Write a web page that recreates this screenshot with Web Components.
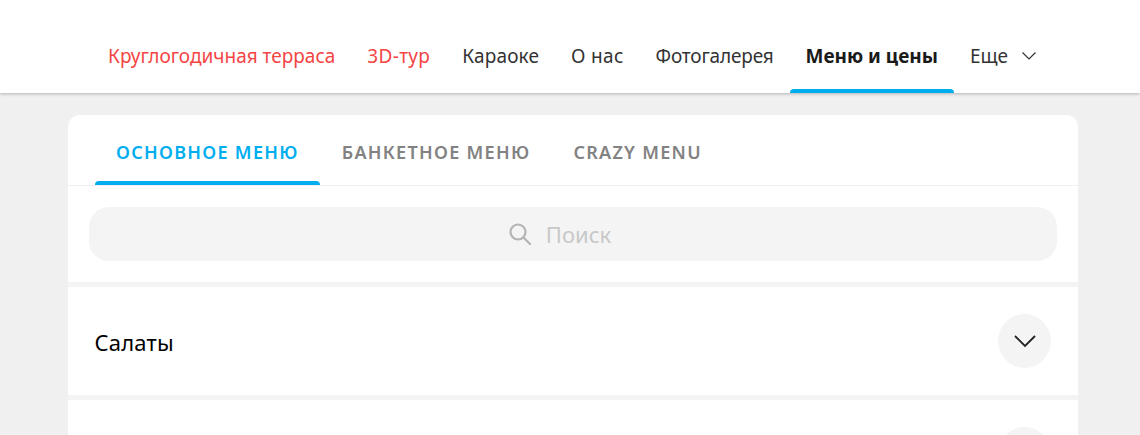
<!DOCTYPE html>
<html lang="ru">
<head>
<meta charset="utf-8">
<style>
  html, body { margin: 0; height: 435px; overflow: hidden; }
  body { background: #f0f0f0; font-family: "Noto Sans", "Open Sans", sans-serif; }
</style>
</head>
<body>
<top-nav>
  <nav-link accent>Круглогодичная терраса</nav-link>
  <nav-link accent style="letter-spacing: .33px">3D-тур</nav-link>
  <nav-link style="letter-spacing: .14px">Караоке</nav-link>
  <nav-link style="letter-spacing: .3px">О нас</nav-link>
  <nav-link style="letter-spacing: -.17px">Фотогалерея</nav-link>
  <nav-link active>Меню и цены</nav-link>
  <nav-link more>Еще</nav-link>
</top-nav>
<menu-card>
  <menu-tab active>Основное меню</menu-tab>
  <menu-tab>Банкетное меню</menu-tab>
  <menu-tab>Crazy menu</menu-tab>
  <search-box slot="search">Поиск</search-box>
  <menu-section slot="sections">Салаты</menu-section>
  <menu-section slot="sections"></menu-section>
</menu-card>
<script>
class TopNav extends HTMLElement {
  constructor() {
    super();
    this.attachShadow({ mode: 'open' }).innerHTML = `
      <style>
        :host {
          display: flex;
          height: 93px;
          padding-left: 92px;
          box-sizing: border-box;
          background: #fff;
          box-shadow: 0 1px 3px rgba(0, 0, 0, 0.25);
          position: relative;
        }
      </style>
      <slot></slot>`;
  }
}

class NavLink extends HTMLElement {
  constructor() {
    super();
    this.attachShadow({ mode: 'open' }).innerHTML = `
      <style>
        :host {
          display: flex;
          align-items: center;
          height: 93px;
          padding: 19px 16px 0;
          box-sizing: border-box;
          font-size: 19px;
          color: #333;
          white-space: nowrap;
          position: relative;
        }
        :host([accent]) { color: #f44545; }
        :host([active]) { color: #1a1a1a; font-weight: 700; }
        :host([active])::after {
          content: '';
          position: absolute;
          left: 0;
          right: 0;
          bottom: 0;
          height: 4px;
          background: #00aeef;
          border-radius: 4px 4px 0 0;
        }
        svg { display: none; margin-left: 13px; }
        :host([more]) svg { display: block; }
      </style>
      <slot></slot>
      <svg width="16" height="10" viewBox="0 0 16 10" fill="none" stroke="#333" stroke-width="1.2"><path d="M1.5 1.5L8 8l6.500-6.500"/></svg>`;
  }
}

class MenuCard extends HTMLElement {
  constructor() {
    super();
    this.attachShadow({ mode: 'open' }).innerHTML = `
      <style>
        :host {
          display: block;
          width: 1010px;
          margin: 22px 0 0 68px;
          background: #f4f4f4;
          border-radius: 12px 12px 0 0;
          overflow: hidden;
        }
        .tabs {
          display: flex;
          height: 71px;
          box-sizing: border-box;
          padding-left: 27px;
          background: #fff;
          border-bottom: 1px solid #efefef;
        }
        .search { background: #fff; padding: 21px; margin-bottom: 5px; }
      </style>
      <div class="tabs"><slot></slot></div>
      <div class="search"><slot name="search"></slot></div>
      <slot name="sections"></slot>`;
  }
}

class MenuTab extends HTMLElement {
  constructor() {
    super();
    this.attachShadow({ mode: 'open' }).innerHTML = `
      <style>
        :host {
          display: flex;
          align-items: center;
          height: 70px;
          padding: 3px 21px 0 22px;
          box-sizing: border-box;
          font-size: 18px;
          font-weight: 600;
          letter-spacing: 1.3px;
          text-transform: uppercase;
          color: #828282;
          white-space: nowrap;
          position: relative;
        }
        :host([active]) { color: #00aeef; padding-left: 21px; }
        :host([active])::after {
          content: '';
          position: absolute;
          left: 0;
          right: 0;
          bottom: 0;
          height: 4px;
          background: #00aeef;
          border-radius: 4px 4px 0 0;
        }
      </style>
      <slot></slot>`;
  }
}

class SearchBox extends HTMLElement {
  constructor() {
    super();
    this.attachShadow({ mode: 'open' }).innerHTML = `
      <style>
        :host {
          display: flex;
          align-items: center;
          justify-content: center;
          gap: 15px;
          height: 54px;
          padding-right: 26px;
          box-sizing: border-box;
          border-radius: 20px;
          background: #f4f4f4;
          font-size: 22px;
          color: #c8c8c8;
        }
        svg { display: block; }
      </style>
      <svg width="22" height="22" viewBox="0 0 22 22" fill="none" stroke="#b4b4b4" stroke-width="2.2"><circle cx="9" cy="9" r="7.500"/><path d="M14.500 14.500l6.500 6.500" stroke-linecap="round"/></svg>
      <slot></slot>`;
  }
}

class MenuSection extends HTMLElement {
  constructor() {
    super();
    this.attachShadow({ mode: 'open' }).innerHTML = `
      <style>
        :host {
          display: flex;
          align-items: center;
          height: 108px;
          margin-bottom: 5px;
          padding: 0 27px 0 26.5px;
          box-sizing: border-box;
          background: #fff;
          font-size: 22px;
          letter-spacing: .2px;
          color: #000;
        }
        .label { padding-top: 2px; }
        .btn {
          display: flex;
          align-items: center;
          justify-content: center;
          width: 53px;
          height: 54px;
          margin-left: auto;
          border-radius: 50%;
          background: #f4f4f4;
        }
      </style>
      <span class="label"><slot></slot></span>
      <div class="btn"><svg width="24" height="14" viewBox="0 0 24 14" fill="none" stroke="#222" stroke-width="1.8"><path d="M2 2l10 10 10-10"/></svg></div>`;
  }
}

customElements.define('top-nav', TopNav);
customElements.define('nav-link', NavLink);
customElements.define('menu-card', MenuCard);
customElements.define('menu-tab', MenuTab);
customElements.define('search-box', SearchBox);
customElements.define('menu-section', MenuSection);
</script>
</body>
</html>
